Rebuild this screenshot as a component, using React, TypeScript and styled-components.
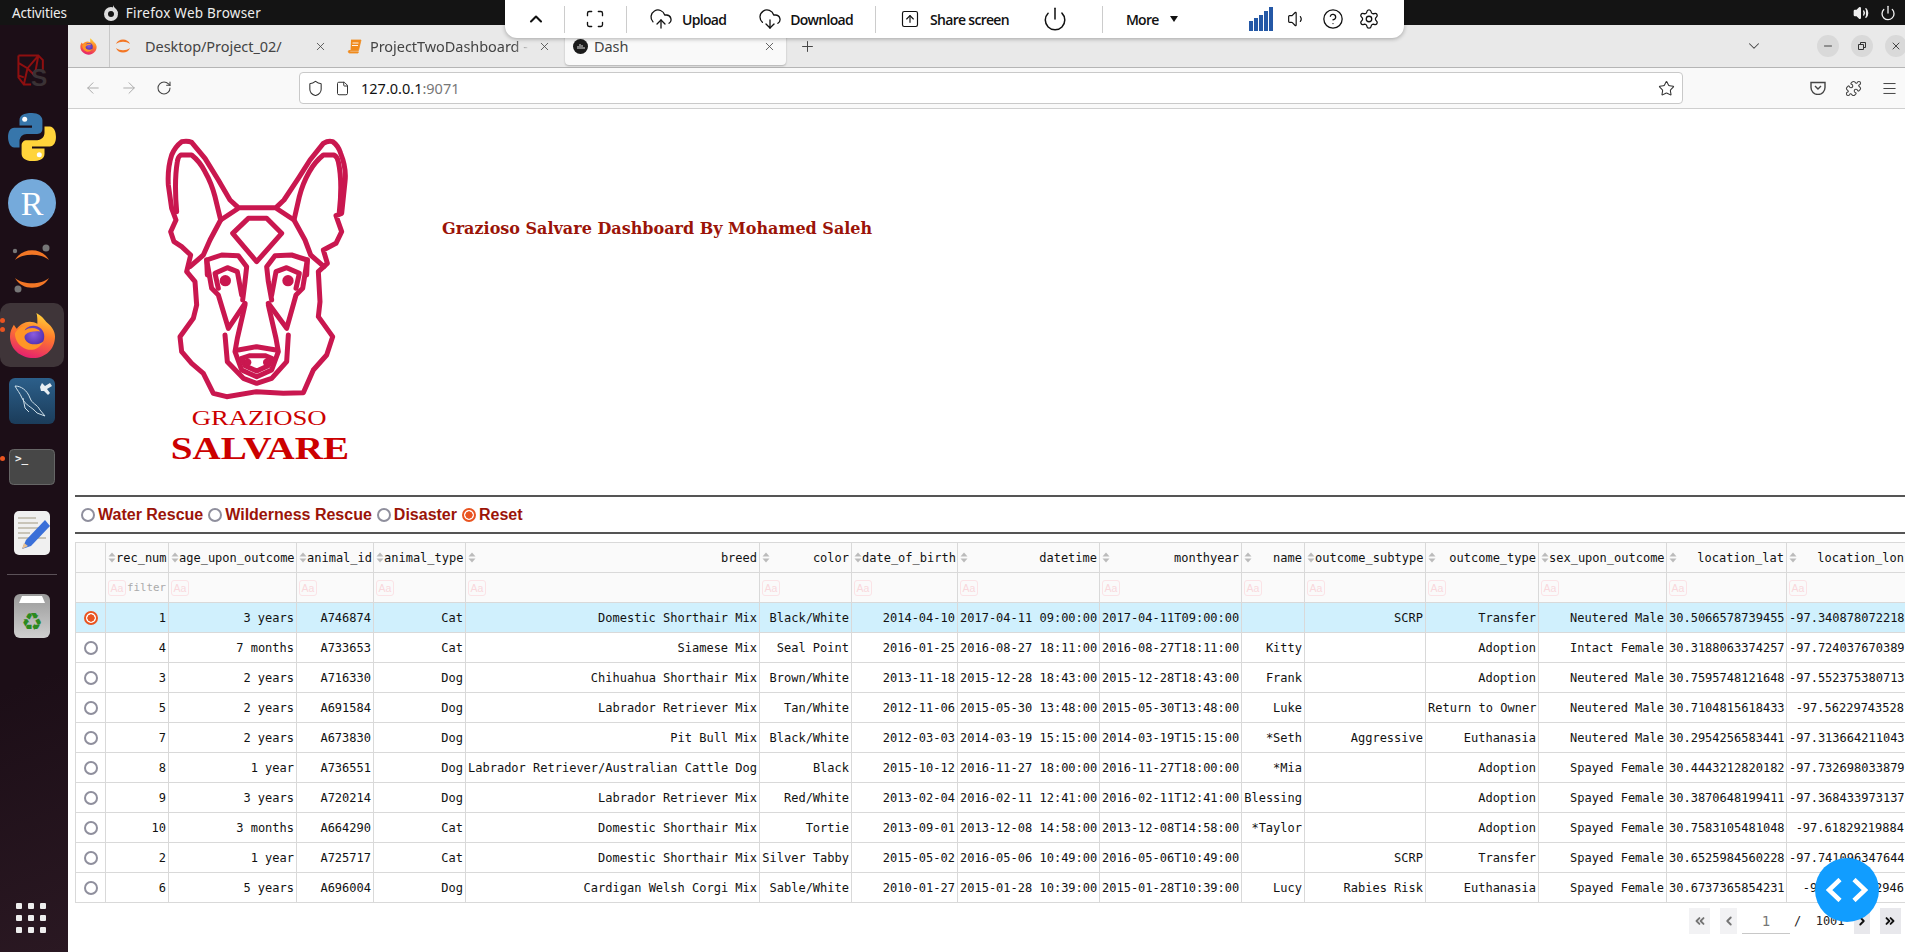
import React from "react";
import styled, { createGlobalStyle } from "styled-components";
import { ChevronUp, Maximize, CloudUpload, CloudDownload, Power, CircleHelp, Settings, Volume1, Volume2, X, Plus, ChevronDown, Minus, ArrowLeft, ArrowRight, RotateCw, Shield, File, Star, Puzzle, Menu, SquareArrowUp, ChevronsLeft, ChevronLeft, ChevronRight, ChevronsRight } from "lucide-react";

const Global = createGlobalStyle`
  html, body { margin: 0; padding: 0; width: 1905px; height: 952px; overflow: hidden; background: #fff; }
  * { box-sizing: border-box; }
`;

const Desktop = styled.div`
  width: 1905px; height: 952px; display: flex; flex-direction: column; position: relative; overflow: hidden;
  font-family: "Noto Sans", sans-serif;
`;
const TopBar = styled.div`
  height: 25px; flex: none; background: #141414; color: #eee; display: flex; align-items: center; padding: 0 9px 0 12px; font-size: 13.5px; letter-spacing: -.15px;
`;
const TopApp = styled.div` margin-left: 35px; display: flex; align-items: center; gap: 6px; letter-spacing: .25px; `;
const TopRight = styled.div` margin-left: auto; display: flex; align-items: center; gap: 11px; `;
const Work = styled.div` flex: 1; display: flex; min-height: 0; `;
const Dock = styled.div`
  width: 68px; flex: none; background: linear-gradient(160deg, #1c0e17 70%, #2a1822); display: flex; flex-direction: column; align-items: flex-start; position: relative; padding-top: 13px;
`;
const DockSlot = styled.div<{ $active?: boolean }>`
  width: 64px; height: 64px; margin: 1px 0; display: flex; align-items: center; justify-content: center; flex: none; position: relative;
  border-radius: 10px; background: ${p => p.$active ? "#3f3539" : "transparent"};
`;
const DockDot = styled.span<{ $top: number }>`
  position: absolute; left: 0; top: ${p => p.$top}px; width: 5px; height: 5px; border-radius: 50%; background: #e95420;
`;
const DockRule = styled.div` width: 50px; height: 1px; background: #5b5158; margin: 8px 0 8px 7px; flex: none; `;
const DockGrid = styled.div`
  position: absolute; left: 16px; bottom: 19px; display: grid; grid-template-columns: repeat(3, 6px); gap: 6px;
  & > i { width: 6px; height: 6px; border-radius: 1px; background: #eee; display: block; }
`;
const Browser = styled.div` flex: 1; display: flex; flex-direction: column; min-width: 0; `;
const TabStrip = styled.div`
  height: 43px; flex: none; background: #e9e9e9; border-bottom: 1px solid #b5b5b5; display: flex; align-items: flex-start; color: #444; font-size: 14.5px;
`;
const FoxSlot = styled.div`
  width: 42px; height: 42px; display: flex; align-items: center; justify-content: center; border-right: 1px solid #c8c8c8; flex: none;
`;
const Tab = styled.div<{ $w: number; $pl: number; $pr: number; $gap: number; $active?: boolean }>`
  width: ${p => p.$w}px; height: ${p => p.$active ? 38 : 42}px; margin-top: ${p => p.$active ? 2 : 0}px; flex: none; display: flex; align-items: center;
  padding: 0 ${p => p.$pr}px 0 ${p => p.$pl}px; gap: ${p => p.$gap}px; white-space: nowrap; overflow: hidden;
  background: ${p => p.$active ? "#f9f9f9" : "transparent"};
  border-radius: ${p => p.$active ? "4px" : "0"};
  box-shadow: ${p => p.$active ? "0 1px 2px rgba(0,0,0,.25)" : "none"};
`;
const TabTitle = styled.span<{ $fade?: boolean }>`
  flex: 1; overflow: hidden; letter-spacing: -.05px;
  ${p => p.$fade ? "-webkit-mask-image: linear-gradient(90deg,#000 90%,transparent);" : ""}
`;
const StripEnd = styled.div` margin-left: auto; display: flex; align-items: center; height: 42px; gap: 12px; margin-right: -2px; `;
const WinBtn = styled.span`
  width: 22px; height: 22px; border-radius: 50%; background: #d9d9d9; display: flex; align-items: center; justify-content: center; flex: none;
`;
const NavBar = styled.div`
  height: 41px; flex: none; background: #f9f9f9; border-bottom: 1px solid #cfcfcf; display: flex; align-items: center; padding-left: 16px; gap: 18px;
`;
const UrlBox = styled.div`
  width: 1384px; height: 32px; margin-left: 109px; background: #fff; border: 1px solid #c9c9c9; border-radius: 4px; display: flex; align-items: center; padding: 0 7px; font-size: 14.5px; gap: 11px; color: #777; flex: none;
`;
const UrlHost = styled.span` color: #111; `;
const UrlText = styled.span` flex: 1; `;
const NavEnd = styled.div` display: flex; align-items: center; gap: 19px; margin-left: 109px; color: #444; flex: none; `;

const Content = styled.div` flex: 1; background: #fff; padding: 0 0 0 7px; min-height: 0; position: relative; overflow: hidden; `;
const Header = styled.div` display: flex; align-items: flex-start; height: 386px; padding-left: 75px; `;
const Logo = styled.svg` width: 220px; height: 350px; margin-top: 16px; flex: none; `;
const Title = styled.h1`
  margin: 110px 0 0 72px; font: bold 16px "DejaVu Serif", serif; color: #9b1408; white-space: nowrap;
`;
const Rule = styled.hr` border: 0; border-top: 2px solid #555; margin: 0; height: 2px; `;
const RadioRow = styled.div` height: 35px; display: flex; align-items: center; padding-left: 5px; `;
const RadioLabel = styled.label`
  display: flex; align-items: center; font: bold 16px "Liberation Sans", sans-serif; color: #9b1408; margin-right: 4px;
`;
const Dot = styled.span<{ $on?: boolean }>`
  width: 14px; height: 14px; border-radius: 50%; flex: none; display: inline-block; margin: 0 3px 0 1px;
  border: 2px solid ${p => p.$on ? "#e95420" : "#8f8f9d"};
  background: ${p => p.$on ? "radial-gradient(circle, #e95420 0 3.4px, #fff 3.9px)" : "#fff"};
`;
const TableWrap = styled.div` margin-top: 8px; width: 2000px; `;
const Table = styled.table`
  border-collapse: collapse; table-layout: fixed; width: 1831px;
  font: 12px "DejaVu Sans Mono", monospace; color: #111;
`;
const Col = styled.col<{ $w: number }>` width: ${p => p.$w}px; `;
const Th = styled.th`
  height: 30px; padding: 0 2px; background: #fafafa; border: 1px solid #d9d9d9; font-weight: normal; text-align: right; white-space: nowrap; overflow: hidden;
`;
const ThInner = styled.div` display: flex; align-items: center; justify-content: space-between; `;
const FilterCell = styled.td`
  height: 30px; padding: 0 2px; background: #fafafa; border: 1px solid #d9d9d9; white-space: nowrap; overflow: hidden;
`;
const FilterInner = styled.div` display: flex; align-items: center; color: #aaa; font-size: 10.8px; gap: 1px; `;
const AaBox = styled.span`
  width: 18px; height: 16px; border: 1px solid #fbe3e6; border-radius: 3px; color: #f9d8dc; font: 10.5px "Liberation Sans", sans-serif; display: flex; align-items: center; justify-content: center; flex: none;
`;
const Td = styled.td<{ $sel?: boolean }>`
  height: 30px; padding: 0 2px; text-align: right; white-space: nowrap; overflow: hidden; border: 1px solid #d9d9d9;
  background: ${p => p.$sel ? "#d0f0fd" : "#fff"};
`;
const SelCell = styled(Td)` text-align: center; padding: 0; `;
const RowDot = styled.span<{ $on?: boolean }>`
  display: inline-block; width: 14px; height: 14px; border-radius: 50%; vertical-align: middle;
  border: 2px solid ${p => p.$on ? "#e95420" : "#8f8f9d"};
  background: ${p => p.$on ? "radial-gradient(circle, #e95420 0 3.4px, #fff 3.9px)" : "#fff"};
`;
const Pager = styled.div`
  position: absolute; left: 1621px; top: 799px; width: 290px; height: 26px; display: flex; align-items: center; font: 12px "DejaVu Sans Mono", monospace; color: #222;
`;
const PageBtn = styled.span<{ $w: number; $ml: number; $off?: boolean }>`
  width: ${p => p.$w}px; height: 26px; margin-left: ${p => p.$ml}px; display: flex; align-items: center; justify-content: center; flex: none;
  background: ${p => p.$off ? "#f2f2f4" : "#e8e8ec"}; color: ${p => p.$off ? "#757575" : "#111"};
`;
const PageInput = styled.span`
  width: 48px; height: 26px; margin-left: 5px; border-bottom: 1px solid #c8c8c8; text-align: center; color: #777; line-height: 26px; font-size: 14px;
`;
const PageOf = styled.span` margin-left: 4px; white-space: pre; `;
const Fab = styled.div`
  position: absolute; left: 1815px; top: 858px; width: 64px; height: 64px; border-radius: 50%; background: #119dff; display: flex; align-items: center; justify-content: center;
`;
const Toolbar = styled.div`
  position: absolute; left: 505px; top: 0; width: 899px; height: 38px; background: #fff; border-radius: 0 0 12px 12px; box-shadow: 0 1px 4px rgba(0,0,0,.3);
  display: flex; align-items: center; font: 600 14px "Open Sans", sans-serif; color: #111; letter-spacing: -.7px;
`;
const ToolSep = styled.span<{ $ml: number }>` width: 1px; height: 27px; background: #ccc; margin-left: ${p => p.$ml}px; flex: none; `;
const ToolItem = styled.span<{ $ml: number; $gap?: number }>` margin-left: ${p => p.$ml}px; display: flex; align-items: center; gap: ${p => p.$gap ?? 8}px; flex: none; `;
const Caret = styled.span` width: 0; height: 0; border-left: 4.5px solid transparent; border-right: 4.5px solid transparent; border-top: 6px solid #111; margin-left: 3px; `;

const cols: [string, number][] = [
  ["rec_num", 63], ["age_upon_outcome", 128], ["animal_id", 77], ["animal_type", 92], ["breed", 294], ["color", 92], ["date_of_birth", 106],
  ["datetime", 142], ["monthyear", 142], ["name", 63], ["outcome_subtype", 121], ["outcome_type", 113], ["sex_upon_outcome", 128], ["location_lat", 120], ["location_lon", 120],
];
const rows: string[][] = [
  ["1","3 years","A746874","Cat","Domestic Shorthair Mix","Black/White","2014-04-10","2017-04-11 09:00:00","2017-04-11T09:00:00","","SCRP","Transfer","Neutered Male","30.5066578739455","-97.340878072218"],
  ["4","7 months","A733653","Cat","Siamese Mix","Seal Point","2016-01-25","2016-08-27 18:11:00","2016-08-27T18:11:00","Kitty","","Adoption","Intact Female","30.3188063374257","-97.724037670389"],
  ["3","2 years","A716330","Dog","Chihuahua Shorthair Mix","Brown/White","2013-11-18","2015-12-28 18:43:00","2015-12-28T18:43:00","Frank","","Adoption","Neutered Male","30.7595748121648","-97.552375380713"],
  ["5","2 years","A691584","Dog","Labrador Retriever Mix","Tan/White","2012-11-06","2015-05-30 13:48:00","2015-05-30T13:48:00","Luke","","Return to Owner","Neutered Male","30.7104815618433","-97.56229743528"],
  ["7","2 years","A673830","Dog","Pit Bull Mix","Black/White","2012-03-03","2014-03-19 15:15:00","2014-03-19T15:15:00","*Seth","Aggressive","Euthanasia","Neutered Male","30.2954256583441","-97.313664211043"],
  ["8","1 year","A736551","Dog","Labrador Retriever/Australian Cattle Dog","Black","2015-10-12","2016-11-27 18:00:00","2016-11-27T18:00:00","*Mia","","Adoption","Spayed Female","30.4443212820182","-97.732698033879"],
  ["9","3 years","A720214","Dog","Labrador Retriever Mix","Red/White","2013-02-04","2016-02-11 12:41:00","2016-02-11T12:41:00","Blessing","","Adoption","Spayed Female","30.3870648199411","-97.368433973137"],
  ["10","3 months","A664290","Cat","Domestic Shorthair Mix","Tortie","2013-09-01","2013-12-08 14:58:00","2013-12-08T14:58:00","*Taylor","","Adoption","Spayed Female","30.7583105481048","-97.61829219884"],
  ["2","1 year","A725717","Cat","Domestic Shorthair Mix","Silver Tabby","2015-05-02","2016-05-06 10:49:00","2016-05-06T10:49:00","","SCRP","Transfer","Spayed Female","30.6525984560228","-97.741096347644"],
  ["6","5 years","A696004","Dog","Cardigan Welsh Corgi Mix","Sable/White","2010-01-27","2015-01-28 10:39:00","2015-01-28T10:39:00","Lucy","Rabies Risk","Euthanasia","Spayed Female","30.6737365854231","-97.7038982946"],
];

const Sort = () => (
  <svg width="8" height="11" viewBox="0 0 8 11" style={{ flex: "none" }}>
    <path d="M4 0.5 7.5 4.5H0.5Z M4 10.5 0.5 6.5H7.5Z" fill="#bbb" />
  </svg>
);

const Fox = ({ s, id }: { s: number; id: string }) => (
  <svg width={s} height={s} viewBox="0 0 48 48">
    <defs>
      <linearGradient id={id} x1="0.7" y1="0" x2="0.4" y2="1"><stop offset="0" stopColor="#ffd43b" /><stop offset=".45" stopColor="#ff7b2b" /><stop offset="1" stopColor="#e5206f" /></linearGradient>
      <radialGradient id={id + "g"} cx=".5" cy=".4" r=".6"><stop offset="0" stopColor="#8b5ce0" /><stop offset="1" stopColor="#4a2aa8" /></radialGradient>
    </defs>
    <path d="M25 47C12 47 1 38 1 25c0-5 2-9 4-12 1 2 2 3 3 4 3-4 8-7 13-7 3 0 6 1 8 2C29 8 29 4 28 1c7 4 8 7 11 10 5 4 8 9 8 14 0 13-10 22-22 22Z" fill={`url(#${id})`} />
    <circle cx="25" cy="25" r="11" fill={`url(#${id}g)`} />
    <path d="M6 22c2-4 6-8 13-8-2 2-3 4-3 5 5-4 13-3 16 1-5-1-12 0-15 3-2 2-1 5 1 7 4 4 12 4 17 0-3 7-11 10-17 8C11 36 6 29 6 22Z" fill="#ff9527" />
  </svg>
);

const Dog = () => {
  const c = "#c9174f";
  return (
    <Logo viewBox="0 0 660 1050">
      <g fill="none" stroke={c} strokeWidth="15" strokeLinejoin="round" strokeLinecap="round">
        <path d="M95 50Q112 46 125 52L165 100 205 165 240 225 265 248 378 248 402 225 445 160 480 105 520 55Q535 46 548 50 565 62 572 85 590 130 585 170L575 265 558 272 575 320 558 355 520 375 532 415 505 440 510 530 505 575 548 635 530 690 490 735 460 803 400 805 320 800 230 815 190 805 160 745 125 715 95 680 90 635 130 580 140 540 135 470 110 440 122 390 95 365 72 350 62 320 78 285 65 250 55 180Q52 130 65 90 75 65 95 50Z" />
        <path d="M80 260Q72 170 82 110 84 95 92 90L125 90Q150 110 165 140 185 175 195 215L212 285 180 345 160 390 120 425" />
        <path d="M212 285 262 252" />
        <path d="M568 260Q578 170 565 110 562 95 552 90L520 90Q495 110 478 140 458 175 448 215L432 285 465 345 482 390 522 425" />
        <path d="M432 285 382 252" />
        <path d="M295 280 350 280 395 325 320 410 248 325Z" />
        <path d="M172 450 170 405 215 390 265 392 290 425 285 470 278 525" />
        <path d="M470 450 472 405 425 390 375 392 350 425 355 470 365 525" />
        <path d="M170 405 185 490 205 510 235 610 285 535" />
        <path d="M472 405 458 490 438 510 410 610 355 535" />
        <path d="M205 490 195 445 232 428 262 440 275 510" />
        <path d="M438 490 448 445 410 428 378 440 365 510" />
        <path d="M225 630 232 710 280 760 320 775 365 760 410 710 415 630" />
        <path d="M285 540 262 640 255 680 275 735 320 755 365 735 385 680 378 640 355 540" />
        <path d="M265 675 320 665 378 675" />
        <path d="M275 700 300 692 345 692 365 700 355 722 320 738 285 722Z" />
      </g>
      <circle cx="226" cy="467" r="17" fill={c} />
      <circle cx="414" cy="467" r="17" fill={c} />
      <circle cx="293" cy="712" r="11" fill={c} />
      <circle cx="350" cy="712" r="11" fill={c} />
      <text x="125" y="900" textLength="405" lengthAdjust="spacingAndGlyphs" fontFamily="Liberation Serif, serif" fontSize="60" fill="#cc0000">GRAZIOSO</text>
      <text x="62" y="1003" textLength="535" lengthAdjust="spacingAndGlyphs" fontFamily="Liberation Serif, serif" fontWeight="bold" fontSize="95" fill="#cc0000">SALVARE</text>
    </Logo>
  );
};

const Bars = () => (
  <svg width="24" height="24" viewBox="0 0 24 24">
    <g fill="#2458a6">
      <rect x="0" y="14" width="4" height="10" /><rect x="5" y="11" width="4" height="13" /><rect x="10" y="8" width="4" height="16" /><rect x="15" y="4" width="4" height="20" /><rect x="20" y="0" width="4" height="24" />
    </g>
  </svg>
);

const Python = () => (
  <svg width="50" height="50" viewBox="0 0 48 48">
    <path d="M24 1c-8 0-12 2-12 7v5h12v2H7c-4 0-6 4-6 9s2 10 6 10h5v-6c0-4 3-7 7-7h10c3 0 5-2 5-5V8c0-4-4-7-10-7Z" fill="#3776ab" />
    <path d="M24 47c8 0 12-2 12-7v-5H24v-2h17c4 0 6-4 6-9s-2-10-6-10h-5v6c0 4-3 7-7 7H19c-3 0-5 2-5 5v8c0 4 4 7 10 7Z" fill="#ffd43b" />
    <circle cx="17" cy="7" r="2.4" fill="#fff" /><circle cx="31" cy="41" r="2.4" fill="#fff" />
  </svg>
);

const dots = Array.from({ length: 9 }, (_, i) => i);

export default function App() {
  return (
    <Desktop>
      <Global />
      <TopBar>
        <span>Activities</span>
        <TopApp>
          <svg width="18" height="18" viewBox="0 0 18 18"><circle cx="9" cy="10" r="7" fill="#ddd" /><circle cx="9" cy="10" r="3" fill="#141414" /><path d="M11 1c1 3 4 4 5 8l-5-1Z" fill="#ddd" /></svg>
          <span>Firefox Web Browser</span>
        </TopApp>
        <TopRight>
          <Volume2 size={16} fill="#eee" />
          <Power size={16} />
        </TopRight>
      </TopBar>
      <Work>
        <Dock>
          <DockSlot>
            <svg width="38" height="38" viewBox="0 0 42 42">
              <path d="M6 4h22l5 5v12M6 4v24l6 8h8M6 12l10 6 12-14M16 18l-4 18M16 18l8 8M6 26l6 2M28 4l-4 22" fill="none" stroke="#8e0f10" strokeWidth="2.2" />
              <text x="20" y="38" fontFamily="Liberation Sans, sans-serif" fontSize="27" fontWeight="bold" fill="#3a3235">S</text>
            </svg>
          </DockSlot>
          <DockSlot><Python /></DockSlot>
          <DockSlot>
            <svg width="48" height="48" viewBox="0 0 48 48"><circle cx="24" cy="24" r="24" fill="#75aadb" /><text x="24" y="36" textAnchor="middle" fontFamily="Liberation Serif, serif" fontSize="34" fill="#fff">R</text></svg>
          </DockSlot>
          <DockSlot>
            <svg width="48" height="52" viewBox="0 0 48 52">
              <path d="M7 17C14 4 34 4 41 17 33 10 15 10 7 17ZM7 35c7 13 27 13 34 0-8 7-26 7-34 0Z" fill="#f37726" />
              <circle cx="38" cy="5" r="3.5" fill="#767677" /><circle cx="7" cy="8" r="2.2" fill="#767677" /><circle cx="10" cy="46" r="3.5" fill="#767677" />
            </svg>
          </DockSlot>
          <DockSlot $active>
            <DockDot $top={15} /><DockDot $top={24} />
            <Fox s={47} id="fa" />
          </DockSlot>
          <DockSlot>
            <svg width="46" height="46" viewBox="0 0 46 46">
              <defs><linearGradient id="my" x1="0" y1="0" x2="0" y2="1"><stop offset="0" stopColor="#2c5f8a" /><stop offset="1" stopColor="#1b3c5a" /></linearGradient></defs>
              <rect width="46" height="46" rx="6" fill="url(#my)" />
              <path d="M6 8c6 0 12 4 15 12 2 6 7 6 10 12l5 6-8-3c-5-6-12-8-15-15-2-5-5-8-7-12Z M14 20l2 10 4 4" fill="none" stroke="#cfe0ea" strokeWidth="1" />
              <path d="M33 5l3 3 5-3 2 3-5 3 3 4-2 2-4-4-3 0-1-4Z" fill="#e8eef2" />
            </svg>
          </DockSlot>
          <DockSlot>
            <DockDot $top={21} />
            <svg width="46" height="36" viewBox="0 0 46 36">
              <rect x=".5" y=".5" width="45" height="35" rx="4" fill="#474747" stroke="#666" />
              <text x="6" y="13" fontFamily="DejaVu Sans Mono, monospace" fontSize="11" fontWeight="bold" fill="#eee">&gt;_</text>
            </svg>
          </DockSlot>
          <DockSlot>
            <svg width="38" height="46" viewBox="0 0 38 46">
              <rect width="36" height="44" x="1" y="1" rx="5" fill="#f0f0f0" />
              <path d="M5 8h18M5 13h20M5 18h22M5 23h12M5 28h28" stroke="#c8c4b8" strokeWidth="2" />
              <path d="M32 10 13 30l-4 9 9-3 19-20Z" fill="#3a6fd8" />
              <path d="M9 39l2-6 4 3Z" fill="#e8c090" />
            </svg>
          </DockSlot>
          <DockRule />
          <DockSlot>
            <svg width="38" height="46" viewBox="0 0 38 46">
              <defs><linearGradient id="tr" x1="0" y1="0" x2="0" y2="1"><stop offset="0" stopColor="#999" /><stop offset="1" stopColor="#cfcfcf" /></linearGradient></defs>
              <rect x="1" y="1" width="36" height="44" rx="6" fill="url(#tr)" />
              <path d="M6 10 9 3h20l3 7Z" fill="#fff" />
              <text x="19" y="37" textAnchor="middle" fontFamily="DejaVu Sans, sans-serif" fontSize="24" fill="#2b8a1f">♻</text>
            </svg>
          </DockSlot>
          <DockGrid>{dots.map(i => <i key={i} />)}</DockGrid>
        </Dock>
        <Browser>
          <TabStrip>
            <FoxSlot><Fox s={17} id="fb" /></FoxSlot>
            <Tab $w={228} $pl={5} $pr={11} $gap={14}>
              <svg width="16" height="18" viewBox="0 0 16 18" style={{ flex: "none" }}><path d="M1 7C3 1 13 1 15 7 11 4 5 4 1 7ZM1 11c2 6 12 6 14 0-4 3-10 3-14 0Z" fill="#f37726" /></svg>
              <TabTitle>Desktop/Project_02/</TabTitle>
              <X size={13} strokeWidth={1.5} />
            </Tab>
            <Tab $w={227} $pl={9} $pr={14} $gap={8}>
              <svg width="15" height="15" viewBox="0 0 15 15" style={{ flex: "none" }}><path d="M4 1h10l-2.5 10.5H2C1 11.5 1 14 2.5 14H11l.4-1.2H3.5" fill="#f08a1d" stroke="#f08a1d" strokeWidth=".8" /><path d="M5.5 4h6M5 6.5h6" stroke="#fff" strokeWidth=".9" /></svg>
              <TabTitle $fade>ProjectTwoDashboard - JupyterLab</TabTitle>
              <X size={13} strokeWidth={1.5} />
            </Tab>
            <Tab $w={221} $pl={8} $pr={10} $gap={6} $active>
              <svg width="15" height="15" viewBox="0 0 15 15" style={{ flex: "none" }}><circle cx="7.5" cy="7.5" r="7.5" fill="#1a1a1a" /><path d="M5 10V7M7 10V5M9 10V6M11 10V8" stroke="#ddd" strokeWidth="1" /></svg>
              <TabTitle>Dash</TabTitle>
              <X size={13} strokeWidth={1.5} />
            </Tab>
            <Tab $w={40} $pl={13} $pr={0} $gap={0}><Plus size={17} strokeWidth={1.4} /></Tab>
            <StripEnd>
              <ChevronDown size={18} strokeWidth={1.4} style={{ marginRight: 42 }} />
              <WinBtn><Minus size={12} /></WinBtn>
              <WinBtn><svg width="10" height="10" viewBox="0 0 10 10"><path d="M1.5 3.5h5v5h-5Z M3.5 3.5v-2h5v5h-2" fill="none" stroke="#333" strokeWidth="1" /></svg></WinBtn>
              <WinBtn><X size={12} /></WinBtn>
            </StripEnd>
          </TabStrip>
          <NavBar>
            <ArrowLeft size={18} strokeWidth={1.3} color="#aaa" />
            <ArrowRight size={18} strokeWidth={1.3} color="#aaa" />
            <RotateCw size={16} strokeWidth={1.6} color="#444" />
            <UrlBox>
              <Shield size={17} strokeWidth={1.5} color="#333" />
              <File size={15} strokeWidth={1.6} color="#333" />
              <UrlText><UrlHost>127.0.0.1</UrlHost>:9071</UrlText>
              <Star size={17} strokeWidth={1.5} color="#333" />
            </UrlBox>
            <NavEnd>
              <svg width="16" height="14" viewBox="0 0 16 14"><path d="M1 1.5h14v5a7 7 0 0 1-14 0Z M5 5l3 3 3-3" fill="none" stroke="#444" strokeWidth="1.4" /></svg>
              <Puzzle size={17} strokeWidth={1.5} />
              <Menu size={17} strokeWidth={1.4} />
            </NavEnd>
          </NavBar>
          <Content>
            <Header>
              <Dog />
              <Title>Grazioso Salvare Dashboard By Mohamed Saleh</Title>
            </Header>
            <Rule />
            <RadioRow>
              <RadioLabel><Dot />Water Rescue</RadioLabel>
              <RadioLabel><Dot />Wilderness Rescue</RadioLabel>
              <RadioLabel><Dot />Disaster</RadioLabel>
              <RadioLabel><Dot $on />Reset</RadioLabel>
            </RadioRow>
            <Rule />
            <TableWrap>
              <Table>
                <colgroup>
                  <Col $w={30} />
                  {cols.map(c => <Col key={c[0]} $w={c[1]} />)}
                </colgroup>
                <thead>
                  <tr>
                    <Th />
                    {cols.map(c => <Th key={c[0]}><ThInner><Sort />{c[0]}</ThInner></Th>)}
                  </tr>
                </thead>
                <tbody>
                  <tr>
                    <FilterCell />
                    {cols.map((c, i) => <FilterCell key={c[0]}><FilterInner><AaBox>Aa</AaBox>{i === 0 ? "filter" : ""}</FilterInner></FilterCell>)}
                  </tr>
                  {rows.map((r, i) => (
                    <tr key={r[2]}>
                      <SelCell $sel={i === 0}><RowDot $on={i === 0} /></SelCell>
                      {r.map((v, j) => <Td key={j} $sel={i === 0}>{v}</Td>)}
                    </tr>
                  ))}
                </tbody>
              </Table>
            </TableWrap>
            <Pager>
              <PageBtn $w={21} $ml={0} $off><ChevronsLeft size={14} strokeWidth={3.2} /></PageBtn>
              <PageBtn $w={17} $ml={10} $off><ChevronLeft size={14} strokeWidth={3.2} /></PageBtn>
              <PageInput>1</PageInput>
              <PageOf>/  1001</PageOf>
              <PageBtn $w={16} $ml={9}><ChevronRight size={14} strokeWidth={3.2} /></PageBtn>
              <PageBtn $w={21} $ml={10}><ChevronsRight size={14} strokeWidth={3.2} /></PageBtn>
            </Pager>
          </Content>
        </Browser>
      </Work>
      <Fab>
        <svg width="42" height="24" viewBox="0 0 42 24"><path d="M14 1.5 3 12l11 10.5M28 1.5 39 12 28 22.5" fill="none" stroke="#fff" strokeWidth="4.5" /></svg>
      </Fab>
      <Toolbar>
        <ToolItem $ml={21}><ChevronUp size={20} strokeWidth={2.5} /></ToolItem>
        <ToolSep $ml={18} />
        <ToolItem $ml={20}><Maximize size={20} strokeWidth={1.6} /></ToolItem>
        <ToolSep $ml={21} />
        <ToolItem $ml={22} $gap={9}><CloudUpload size={24} strokeWidth={1.3} />Upload</ToolItem>
        <ToolItem $ml={32}><CloudDownload size={24} strokeWidth={1.3} />Download</ToolItem>
        <ToolSep $ml={22} />
        <ToolItem $ml={24} $gap={10}><SquareArrowUp size={20} strokeWidth={1.4} />Share screen</ToolItem>
        <ToolItem $ml={33}><Power size={26} strokeWidth={1.4} /></ToolItem>
        <ToolSep $ml={34} />
        <ToolItem $ml={23}>More<Caret /></ToolItem>
        <ToolItem $ml={71}><Bars /></ToolItem>
        <ToolItem $ml={14}><Volume1 size={20} strokeWidth={1.4} /></ToolItem>
        <ToolItem $ml={15}><CircleHelp size={22} strokeWidth={1.4} /></ToolItem>
        <ToolItem $ml={14}><Settings size={22} strokeWidth={1.4} /></ToolItem>
      </Toolbar>
    </Desktop>
  );
}
